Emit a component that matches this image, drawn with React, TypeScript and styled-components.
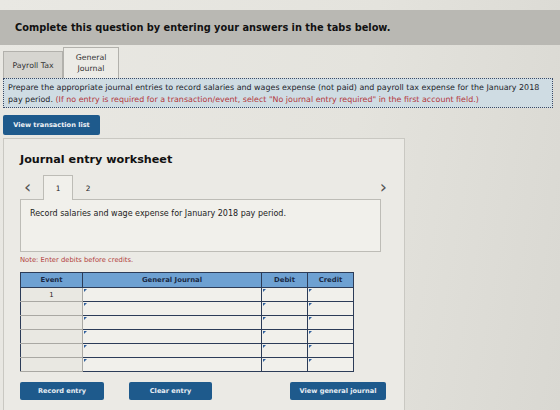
import styled, { createGlobalStyle } from 'styled-components';

const GlobalStyle = createGlobalStyle`
  html, body {
    margin: 0;
    padding: 0;
    background: #e3e1db;
  }
  body {
    font-family: "DejaVu Sans", Verdana, sans-serif;
    color: #1e1e1e;
    width: 560px;
    height: 410px;
    overflow: hidden;
  }
`;

const rows = ['1', '', '', '', '', ''];

export default function App() {
	return (
		<>
			<GlobalStyle />
			<Page>
				<TopBar>Complete this question by entering your answers in the tabs below.</TopBar>

				<Tabs>
					<Tab>Payroll Tax</Tab>
					<Tab active>
						General
						<br />
						Journal
					</Tab>
				</Tabs>

				<Instructions>
					Prepare the appropriate journal entries to record salaries and wages expense (not paid) and payroll tax expense for the January 2018
					<br />
					pay period. <Red>(If no entry is required for a transaction/event, select "No journal entry required" in the first account field.)</Red>
				</Instructions>

				<ListButton>View transaction list</ListButton>

				<Worksheet>
					<Title>Journal entry worksheet</Title>

					<NavRow>
						<Arrow>&lsaquo;</Arrow>
						<EntryTab active>1</EntryTab>
						<EntryTab>2</EntryTab>
						<Spacer />
						<Arrow>&rsaquo;</Arrow>
					</NavRow>

					<EntryBox>Record salaries and wage expense for January 2018 pay period.</EntryBox>

					<Note>Note: Enter debits before credits.</Note>

					<Table>
						<thead>
							<tr>
								<Th w={61}>Event</Th>
								<Th w={178}>General Journal</Th>
								<Th w={45}>Debit</Th>
								<Th w={45}>Credit</Th>
							</tr>
						</thead>
						<tbody>
							{rows.map((ev, i) => (
								<tr key={i}>
									<EventCell>{ev}</EventCell>
									<InputCell />
									<InputCell />
									<InputCell />
								</tr>
							))}
						</tbody>
					</Table>

					<Actions>
						<ActionButton width={84}>Record entry</ActionButton>
						<ActionButton width={83}>Clear entry</ActionButton>
						<Spacer />
						<ActionButton width={96}>View general journal</ActionButton>
					</Actions>
				</Worksheet>
			</Page>
		</>
	);
}

const Page = styled.div`
  padding-top: 10px;
  display: flex;
  flex-direction: column;
  background: linear-gradient(100deg, #e9e8e3 0%, #e4e3dd 60%, #d9d8d2 100%);
  height: 400px;
`;

const TopBar = styled.div`
  height: 35px;
  display: flex;
  align-items: center;
  padding-left: 15px;
  background: #b9b8b3;
  font-size: 9.8px;
  font-weight: bold;
  color: #111;
`;

const Tabs = styled.div`
  display: flex;
  align-items: flex-end;
  margin-top: 2px;
  padding-left: 3px;
`;

const Tab = styled.div<{ active?: boolean }>`
  width: ${({ active }) => (active ? '56px' : '60px')};
  height: ${({ active }) => (active ? '31px' : '27px')};
  display: flex;
  align-items: center;
  justify-content: center;
  text-align: center;
  box-sizing: border-box;
  border: 1px solid #b2b1ac;
  border-bottom: none;
  background: ${({ active }) => (active ? '#ecebe6' : '#d6d5d0')};
  font-size: 7.8px;
  line-height: 11px;
  color: #333;
`;

const Instructions = styled.div`
  margin: 0 7px 0 3px;
  height: 30px;
  box-sizing: border-box;
  padding: 3px 4px;
  background: #cfdce3;
  border: 1px dotted #3c4a66;
  font-size: 7.95px;
  line-height: 11.5px;
  color: #1c1c2a;
  white-space: nowrap;
`;

const Red = styled.span`
  color: #b3363a;
`;

const ListButton = styled.div`
  margin: 7px 0 0 3px;
  width: 97px;
  height: 20px;
  display: flex;
  align-items: center;
  justify-content: center;
  background: #1e5a8c;
  border-radius: 2px;
  color: #eef2f6;
  font-size: 6.6px;
  font-weight: bold;
`;

const Worksheet = styled.div`
  margin: 3px 0 0 3px;
  width: 402px;
  flex: 1;
  box-sizing: border-box;
  border: 1px solid #c9c8c2;
  border-bottom: none;
  background: #ebeae5;
  padding: 11px 0 0 16px;
  display: flex;
  flex-direction: column;
`;

const Title = styled.div`
  font-size: 11.2px;
  font-weight: bold;
  color: #111;
  height: 20px;
  line-height: 20px;
`;

const NavRow = styled.div`
  margin-top: 4px;
  height: 25px;
  display: flex;
  align-items: flex-end;
  width: 372px;
`;

const Arrow = styled.div`
  align-self: center;
  font-size: 18px;
  line-height: 16px;
  color: #555;
  padding: 0 5px 0 4px;
  margin-top: 1px;
`;

const EntryTab = styled.div<{ active?: boolean }>`
  width: 30px;
  height: 25px;
  box-sizing: border-box;
  display: flex;
  align-items: center;
  justify-content: center;
  font-size: 7.4px;
  color: #222;
  background: ${({ active }) => (active ? '#f1f0eb' : 'transparent')};
  border: 1px solid ${({ active }) => (active ? '#bdbcb6' : 'transparent')};
  border-bottom: none;
  margin-left: ${({ active }) => (active ? '7px' : '0')};
  margin-bottom: -1px;
  position: relative;
`;

const Spacer = styled.div`
  flex: 1;
`;

const EntryBox = styled.div`
  width: 361px;
  height: 53px;
  box-sizing: border-box;
  border: 1px solid #bdbcb6;
  background: #f1f0eb;
  padding: 9px 9px;
  font-size: 8px;
  color: #222;
`;

const Note = styled.div`
  margin-top: 4px;
  font-size: 6.8px;
  color: #b2403c;
`;

const Table = styled.table`
  margin-top: 8px;
  width: 329px;
  border-collapse: collapse;
  table-layout: fixed;
  font-size: 6.9px;
`;

const Th = styled.th<{ w: number }>`
  width: ${({ w }) => w}px;
  height: 14px;
  padding: 0;
  background: #6ea1d2;
  color: #1a2a46;
  font-weight: bold;
  border: 1.5px solid #2c3c58;
`;

const EventCell = styled.td`
  height: 13px;
  padding: 0;
  text-align: center;
  color: #222;
  border: 1px solid #a9a8a3;
  border-left: 1.5px solid #2c3c58;
  background: #e9e8e2;
`;

const InputCell = styled.td`
  height: 13px;
  padding: 0;
  position: relative;
  background: #f1f0eb;
  border: 1.5px solid #2c3c58;

  &::before {
    content: '';
    position: absolute;
    left: 1px;
    top: 1px;
    border-left: 3px solid #2f5f9c;
    border-bottom: 3px solid transparent;
  }
`;

const Actions = styled.div`
  margin-top: 10px;
  width: 366px;
  display: flex;
  gap: 25px;
`;

const ActionButton = styled.div<{ width: number }>`
  width: ${({ width }) => width}px;
  height: 18px;
  display: flex;
  align-items: center;
  justify-content: center;
  background: #1e5a8c;
  border-radius: 2px;
  color: #e6edf3;
  font-size: 6.6px;
  font-weight: bold;
`;
